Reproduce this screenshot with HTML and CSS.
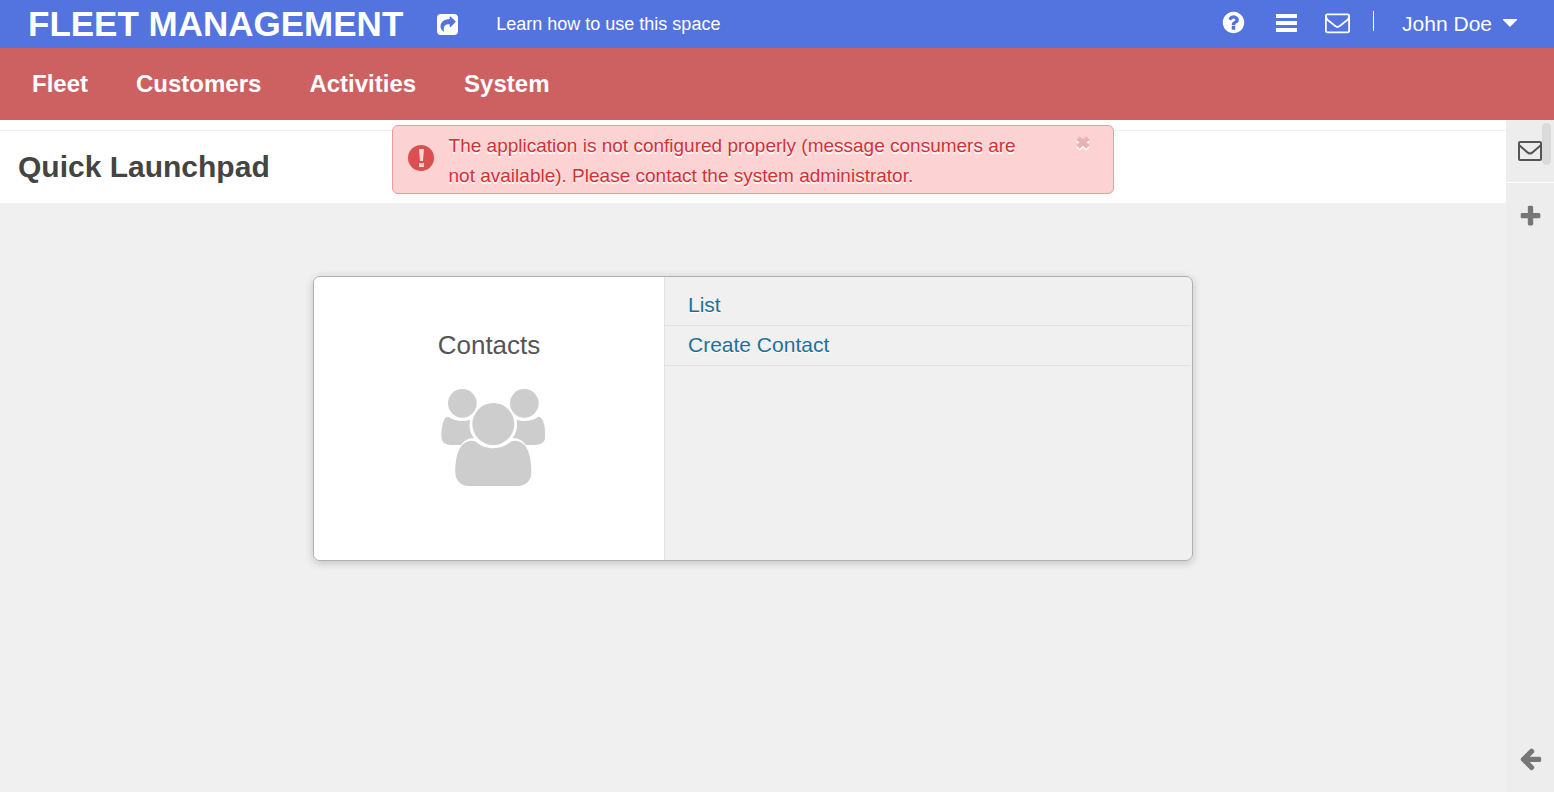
FILE: index.html
```html
<!DOCTYPE html>
<html lang="en">
<head>
<meta charset="utf-8">
<title>Fleet Management</title>
<link rel="stylesheet" href="styles.css">
</head>
<body>
<header class="topbar">
  <a class="brand" href="#">FLEET MANAGEMENT</a>
  <a class="learn" href="#">
    <svg class="share" viewBox="0 0 63 63" aria-hidden="true"><rect width="63" height="63" rx="12"/><path d="M38 7Q40 7 42 9L55 21Q57 23 55 25L42 38Q40 40 38 38V31C24 30 18 38 21 51Q21 54 18 52C4 40 9 16 38 15Z"/></svg>
    <span>Learn how to use this space</span>
  </a>
  <div class="tools">
    <button class="tool" type="button" aria-label="Help"><svg class="icon" viewBox="0 0 1792 1792"><path d="M1024 1376v-192q0-14-9-23t-23-9h-192q-14 0-23 9t-9 23v192q0 14 9 23t23 9h192q14 0 23-9t9-23zm256-672q0-88-55.500-163t-138.500-116-170-41q-243 0-371 213-15 24 8 42l132 100q7 6 19 6 16 0 25-12 53-68 86-92 34-24 86-24 48 0 85.500 26t37.500 59q0 38-20 61t-68 45q-63 28-115.500 86.500t-52.500 125.500v36q0 14 9 23t23 9h192q14 0 23-9t9-23q0-19 21.500-49.500t54.500-49.500q32-18 49-28.500t46-35 44.500-48 28-60.500 12.500-81zm384 192q0 209-103 385.500t-279.500 279.500-385.500 103-385.500-103-279.500-279.500-103-385.500 103-385.500 279.500-279.500 385.500-103 385.500 103 279.500 279.500 103 385.500z"/></svg></button>
    <button class="tool" type="button" aria-label="Menu"><svg class="icon" viewBox="0 0 25 25"><path d="M2 4h21v4H2zM2 11h21v4H2zM2 18h21v4H2z"/></svg></button>
    <button class="tool" type="button" aria-label="Messages"><svg class="icon" viewBox="0 0 1792 1792"><path d="M1664 1504v-768q-32 36-69 66-268 206-426 338-51 43-83 67t-86.500 48.500-102.500 24.500h-2q-48 0-102.500-24.500t-86.500-48.500-83-67q-158-132-426-338-37-30-69-66v768q0 13 9.500 22.500t22.500 9.500h1472q13 0 22.500-9.500t9.500-22.500zm0-1051v-24.500l-.5-13-3-12.500-5.500-9-9-7.500-14-2.500h-1472q-13 0-22.500 9.500t-9.500 22.500q0 168 147 284 193 152 401 317 6 5 35 29.500t46 37.500 44.500 31.500 50.500 27.500 43 9h2q20 0 43-9t50.500-27.500 44.500-31.500 46-37.500 35-29.500q208-165 401-317 54-43 100.500-115.500t46.500-131.500zm128-37v1088q0 66-47 113t-113 47h-1472q-66 0-113-47t-47-113v-1088q0-66 47-113t113-47h1472q66 0 113 47t47 113z"/></svg></button>
    <button class="user" type="button"><span>John Doe</span><svg class="caret" viewBox="0 0 14 8" aria-hidden="true"><path d="M0 0h14v1L7 8 0 1z"/></svg></button>
  </div>
</header>
<nav class="menu">
  <a href="#">Fleet</a>
  <a href="#">Customers</a>
  <a href="#">Activities</a>
  <a href="#">System</a>
</nav>
<div class="shell">
  <main class="content">
    <div class="pagehead"><h1>Quick Launchpad</h1></div>
    <div class="alert" role="alert">
      <svg class="alert-icon" viewBox="0 0 27 27" aria-hidden="true"><circle cx="13" cy="13" r="13"/><path d="M11 4h5l-1 12h-3zM11 18h5v4h-5z"/></svg>
      <p>The application is not configured properly (message consumers are not available). Please contact the system administrator.</p>
      <button class="close" type="button" aria-label="Close"><svg viewBox="0 0 16 16"><path class="glow" d="M3 5l10 9M13 5L3 14"/><path d="M3 3l10 9M13 3L3 12"/></svg></button>
    </div>
    <section class="card">
      <div class="card-side">
        <h2>Contacts</h2>
        <svg class="people" viewBox="123 207 312 291" aria-hidden="true">
          <circle cx="187" cy="250" r="43"/><circle cx="373" cy="250" r="43"/><circle cx="280" cy="312" r="63"/>
          <path d="M145 290C162 303 192 307 210 299C206 325 213 343 222 354C205 354 190 363 183 375H155C135 375 124 366 124 348C124 320 130 289 145 290Z"/>
          <path d="M415 290C398 303 368 307 350 299C354 325 347 343 338 354C355 354 370 363 377 375H405C425 375 436 366 436 348C436 320 430 289 415 290Z"/>
          <path d="M228 365C255 391 305 391 332 365C338 362 347 362 355 364C384 371 394 413 394 457C394 482 377 498 354 498H206C183 498 166 482 166 457C166 413 176 371 205 364C213 362 222 362 228 365Z"/>
        </svg>
      </div>
      <ul class="links">
        <li><a href="#">List</a></li>
        <li><a href="#">Create Contact</a></li>
      </ul>
    </section>
  </main>
  <aside class="rail">
    <button class="rail-mail" type="button" aria-label="Messages"><svg class="icon" viewBox="0 0 24 20"><rect x="1" y="1" width="22" height="18" rx="1"/><path d="M1 4l8 7q3 3 6 0l8-7"/></svg></button>
    <button class="rail-button" type="button" aria-label="Add"><svg class="icon" viewBox="0 0 1792 1792"><path d="M1600 736v192q0 40-28 68t-68 28h-416v416q0 40-28 68t-68 28h-192q-40 0-68-28t-28-68v-416h-416q-40 0-68-28t-28-68v-192q0-40 28-68t68-28h416v-416q0-40 28-68t68-28h192q40 0 68 28t28 68v416h416q40 0 68 28t28 68z"/></svg></button>
    <button class="rail-button rail-last" type="button" aria-label="Expand"><svg class="icon" viewBox="0 0 1792 1792"><path d="M1664 896v128q0 53-32.500 90.500t-84.500 37.500h-704l293 294q38 36 38 90t-38 90l-75 76q-37 37-90 37-52 0-91-37l-651-652q-37-37-37-90 0-52 37-91l651-650q38-38 91-38 52 0 90 38l75 74q38 38 38 91t-38 91l-293 293h704q52 0 84.500 37.500t32.500 90.500z"/></svg></button>
    <span class="thumb"></span>
  </aside>
</div>
</body>
</html>
```
FILE: styles.css
```css
* { box-sizing: border-box; }
body {
  margin: 0;
  min-height: 100vh;
  display: flex;
  flex-direction: column;
  background: #f0f0f0;
  color: #444;
  font-family: "Liberation Sans", Arial, sans-serif;
}
a { color: inherit; text-decoration: none; }
button { margin: 0; padding: 0; border: 0; background: none; color: inherit; font: inherit; cursor: pointer; }
svg { display: block; fill: currentColor; }
h1, h2, p, ul { margin: 0; padding: 0; }
.icon { width: 25px; height: 25px; }

.topbar {
  display: flex;
  align-items: center;
  height: 48px;
  padding: 0 37px 0 28px;
  background: #5373df;
  color: #fff;
}
.brand { font-size: 35px; line-height: 48px; font-weight: bold; }
.learn { display: flex; align-items: center; gap: 38px; margin-left: 34px; padding-top: 1px; font-size: 18px; }
.share { width: 21px; height: 21px; }
.share path { fill: #5373df; }
.tools { display: flex; align-items: center; margin-left: auto; }
.tool { margin-right: 28px; padding-bottom: 3px; }
.tool + .tool { margin-right: 26px; }
.tool:nth-child(3) { margin-right: 23px; }
.user {
  display: flex;
  align-items: center;
  gap: 11px;
  padding-left: 29px;
  background: linear-gradient(#fff, #fff) left top / 1px 20px no-repeat;
  font-size: 21px;
  line-height: 26px;
}
.caret { width: 14px; height: 8px; margin-bottom: 2px; }

.menu {
  display: flex;
  align-items: center;
  gap: 48px;
  height: 72px;
  padding: 0 32px;
  background: #cd6161;
  color: #fff;
  font-size: 24px;
  font-weight: bold;
}

.shell { flex: 1; display: flex; }
.content { flex: 1; position: relative; }
.pagehead { padding: 10px 0 0; background: #fff; }
.pagehead h1 {
  padding: 18px;
  border-top: 1px solid #f0f0f0;
  font-size: 30px;
  line-height: 36px;
}

.alert {
  position: absolute;
  top: 5px;
  left: 26%;
  width: 48%;
  display: flex;
  align-items: flex-start;
  padding: 5px 22px 2px 15px;
  border: 1px solid #f0999b;
  border-radius: 6px;
  background: #fdd2d3;
  color: #cf3338;
  font-size: 19px;
  line-height: 30px;
  text-shadow: 0 2px 1px #fff;
}
.alert-icon { flex: none; width: 27px; height: 27px; margin: 14px 14px 0 0; fill: #db4f51; }
.alert-icon path { fill: #fdd2d3; }
.alert p { flex: 1; margin-right: 40px; }
.close { flex: none; margin-top: 4px; }
.close svg { width: 16px; height: 16px; fill: none; stroke: #e6b4b5; stroke-width: 5; }
.close .glow { stroke: #fff; }

.card {
  display: flex;
  width: 880px;
  max-width: 90%;
  min-height: 285px;
  margin: 73px auto;
  overflow: hidden;
  border: 1px solid #b0b0b0;
  border-radius: 7px;
  box-shadow: 0 2px 9px rgba(0, 0, 0, .2);
}
.card-side {
  flex: 2;
  display: flex;
  flex-direction: column;
  align-items: center;
  gap: 29px;
  padding-top: 53px;
  border-right: 1px solid #e2e2e2;
  background: #fff;
}
.card-side h2 { font-size: 26px; line-height: 30px; font-weight: normal; color: #555; }
.people { width: 104px; height: 97px; margin-left: 8px; fill: #cdcdcd; }
.links { flex: 3; padding: 9px 2px 0 0; list-style: none; }
.links li {
  padding: 0 23px 1px;
  border-bottom: 1px solid #e2e2e2;
  color: #1c6f99;
  font-size: 21px;
  line-height: 38px;
}
.links a { text-shadow: 0 1px 0 #fff; }

.rail {
  position: relative;
  display: flex;
  flex-direction: column;
  width: 48px;
  background: #ededed;
  color: #777;
}
.rail button { display: flex; justify-content: center; align-items: center; }
.rail-mail { height: 63px; border-bottom: 1px solid #fff; color: #555; }
.rail-mail svg { width: 24px; height: 20px; fill: none; stroke: currentColor; stroke-width: 2; }
.rail-button { height: 66px; }
.rail-last { height: 68px; margin-top: auto; }
.thumb {
  position: absolute;
  top: 3px;
  right: 3px;
  width: 9px;
  height: 42px;
  border-radius: 5px;
  background: #dadada;
}
```
